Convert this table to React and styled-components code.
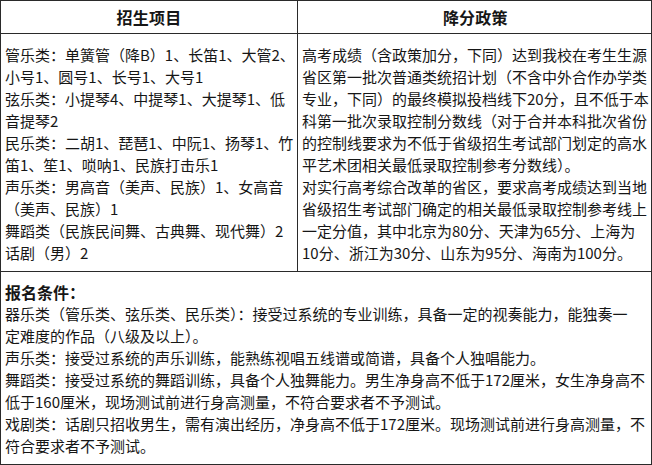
import React from "react";
import styled, { createGlobalStyle } from "styled-components";

const GlobalStyle = createGlobalStyle`
  html, body {
    margin: 0;
    padding: 0;
    background: #fff;
  }
  body {
    font-family: "Noto Sans CJK SC", "Noto Sans", sans-serif;
    color: #161616;
  }
`;

const Sheet = styled.div`
  box-sizing: border-box;
  width: 652px;
  height: 465px;
  border: 1px solid #2a2a2a;
  display: grid;
  grid-template-columns: 297px 1fr;
  grid-template-rows: 33px 238px 1fr;
  background: #fff;
`;

const HeadCell = styled.div`
  box-sizing: border-box;
  display: flex;
  align-items: center;
  justify-content: center;
  font-size: 16px;
  font-weight: 700;
  border-bottom: 1px solid #2a2a2a;
  border-right: ${(p) => (p.$last ? "none" : "1px solid #2a2a2a")};
  letter-spacing: 0.2px;
`;

const BodyCell = styled.div`
  box-sizing: border-box;
  padding: 10px 4px 0 4px;
  font-size: 15px;
  line-height: 22px;
  border-bottom: 1px solid #2a2a2a;
  border-right: ${(p) => (p.$last ? "none" : "1px solid #2a2a2a")};
`;

const Conditions = styled.div`
  grid-column: 1 / -1;
  box-sizing: border-box;
  padding: 9px 4px 0 4px;
  font-size: 15px;
  line-height: 22px;
`;

const Title = styled.div`
  font-size: 16px;
  font-weight: 700;
`;

const Line = styled.div`
  white-space: nowrap;
`;

const programs = [
  "管乐类：单簧管（降B）1、长笛1、大管2、",
  "小号1、圆号1、长号1、大号1",
  "弦乐类：小提琴4、中提琴1、大提琴1、低",
  "音提琴2",
  "民乐类：二胡1、琵琶1、中阮1、扬琴1、竹",
  "笛1、笙1、唢呐1、民族打击乐1",
  "声乐类：男高音（美声、民族）1、女高音",
  "（美声、民族）1",
  "舞蹈类（民族民间舞、古典舞、现代舞）2",
  "话剧（男）2",
];

const policy = [
  "高考成绩（含政策加分，下同）达到我校在考生生源",
  "省区第一批次普通类统招计划（不含中外合作办学类",
  "专业，下同）的最终模拟投档线下20分，且不低于本",
  "科第一批次录取控制分数线（对于合并本科批次省份",
  "的控制线要求为不低于省级招生考试部门划定的高水",
  "平艺术团相关最低录取控制参考分数线）。",
  "对实行高考综合改革的省区，要求高考成绩达到当地",
  "省级招生考试部门确定的相关最低录取控制参考线上",
  "一定分值，其中北京为80分、天津为65分、上海为",
  "10分、浙江为30分、山东为95分、海南为100分。",
];

const requirements = [
  "器乐类（管乐类、弦乐类、民乐类）：接受过系统的专业训练，具备一定的视奏能力，能独奏一",
  "定难度的作品（八级及以上）。",
  "声乐类：接受过系统的声乐训练，能熟练视唱五线谱或简谱，具备个人独唱能力。",
  "舞蹈类：接受过系统的舞蹈训练，具备个人独舞能力。男生净身高不低于172厘米，女生净身高不",
  "低于160厘米，现场测试前进行身高测量，不符合要求者不予测试。",
  "戏剧类：话剧只招收男生，需有演出经历，净身高不低于172厘米。现场测试前进行身高测量，不",
  "符合要求者不予测试。",
];

export default function App() {
  return (
    <>
      <GlobalStyle />
      <Sheet>
        <HeadCell>招生项目</HeadCell>
        <HeadCell $last>降分政策</HeadCell>
        <BodyCell>
          {programs.map((t) => (
            <Line key={t}>{t}</Line>
          ))}
        </BodyCell>
        <BodyCell $last>
          {policy.map((t) => (
            <Line key={t}>{t}</Line>
          ))}
        </BodyCell>
        <Conditions>
          <Title>报名条件：</Title>
          {requirements.map((t) => (
            <Line key={t}>{t}</Line>
          ))}
        </Conditions>
      </Sheet>
    </>
  );
}
